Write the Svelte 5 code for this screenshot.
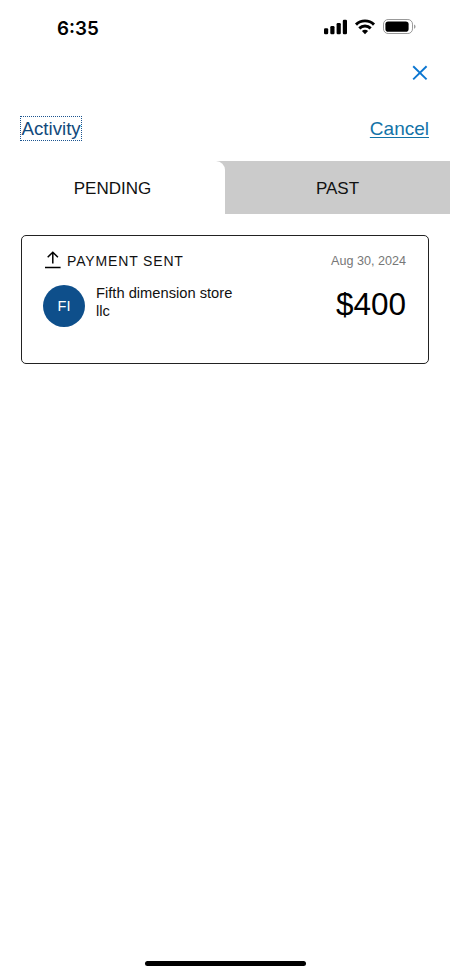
<script>
	let activeTab = $state('pending');

	const tabs = [
		{ value: 'pending', label: 'PENDING' },
		{ value: 'past', label: 'PAST' }
	];

	const payments = [
		{
			status: 'pending',
			type: 'PAYMENT SENT',
			date: 'Aug 30, 2024',
			initials: 'FI',
			name: 'Fifth dimension store llc',
			amount: '$400'
		}
	];

	let visiblePayments = $derived(payments.filter((p) => p.status === activeTab));
</script>

<div class="screen">
	<div class="statusBar">
		<span class="time">6:35</span>
		<svg class="statusIcons" width="94" height="20" viewBox="322 17 94 20">
			<rect x="324" y="28.2" width="4.2" height="6" rx="1.2" />
			<rect x="330.3" y="26" width="4.2" height="8.2" rx="1.2" />
			<rect x="336.6" y="23" width="4.2" height="11.2" rx="1.2" />
			<rect x="342.8" y="19.8" width="4.2" height="14.4" rx="1.2" />
			<g fill="none" stroke="#000" stroke-width="2.9">
				<path d="M356 24.6a12.8 12.8 0 0 1 18 0" />
				<path d="M359.3 28.4a8.1 8.1 0 0 1 11.4 0" />
			</g>
			<path d="M365 34.3l-3.1-3.2a4.5 4.5 0 0 1 6.2 0z" />
			<rect x="383.5" y="19.5" width="29" height="14" rx="4.6" fill="none" stroke="#999" />
			<rect x="385.4" y="21.4" width="23.2" height="10.3" rx="2.8" />
			<path d="M414.2 24.6c1.7.6 1.7 3.6 0 4.2z" fill="#888" />
		</svg>
	</div>

	<div class="closeRow">
		<button class="close" aria-label="Close">
			<svg width="16" height="16" viewBox="0 0 16 16">
				<path d="M1.2 1.2l13.4 13.2M14.6 1.2l-13.4 13.2" fill="none" stroke="#0b76d1" stroke-width="1.9" />
			</svg>
		</button>
	</div>

	<header class="heading">
		<h1>Activity</h1>
		<button class="cancel">Cancel</button>
	</header>

	<div class="tabs" role="tablist">
		{#each tabs as tab}
			<button
				class="tab"
				class:active={tab.value === activeTab}
				role="tab"
				aria-selected={tab.value === activeTab}
				onclick={() => (activeTab = tab.value)}
			>
				<span>{tab.label}</span>
			</button>
		{/each}
	</div>

	<main>
		{#each visiblePayments as payment}
			<article class="card">
				<div class="cardTop">
					<svg class="sentIcon" width="16" height="18" viewBox="0 0 16 18">
						<path
							d="M0 16.4h15.6M7.8 12.6V1.5M2.7 6.2L7.8 1.2l5.1 5"
							fill="none"
							stroke="#000"
							stroke-width="1.5"
						/>
					</svg>
					<span class="type">{payment.type}</span>
					<span class="date">{payment.date}</span>
				</div>
				<div class="cardBody">
					<div class="avatar">{payment.initials}</div>
					<div class="name">{payment.name}</div>
					<div class="amount">{payment.amount}</div>
				</div>
			</article>
		{/each}
	</main>

	<div class="homeBar"></div>
</div>

<style>
	:global(body) {
		margin: 0;
		background-color: #fff;
	}
	.screen {
		display: flex;
		flex-direction: column;
		box-sizing: border-box;
		width: 450px;
		height: 975px;
		overflow: hidden;
		font-family: 'Liberation Sans', Arial, sans-serif;
		color: #111;
	}
	button {
		padding: 0;
		border: none;
		background: none;
		font-family: inherit;
		color: inherit;
		cursor: pointer;
	}
	svg {
		display: block;
	}
	.statusBar {
		display: flex;
		justify-content: space-between;
		align-items: center;
		height: 54px;
		padding: 2px 34px 0 57px;
		box-sizing: border-box;
	}
	.statusIcons {
		margin-top: -2px;
	}
	.time {
		font-family: Inter, sans-serif;
		font-size: 18.8px;
		font-weight: 600;
		color: #000;
	}
	.closeRow {
		display: flex;
		justify-content: flex-end;
		height: 62px;
		padding: 11px 22px 0 0;
		box-sizing: border-box;
	}
	.close {
		width: 16px;
		height: 16px;
	}
	.heading {
		display: flex;
		justify-content: space-between;
		align-items: flex-start;
		height: 26px;
		padding: 0 21px 0 20px;
		margin-bottom: 19px;
	}
	h1 {
		margin: 0;
		padding: 0 0.5px;
		border: 1px dotted #1c5590;
		font-size: 18.7px;
		font-weight: 400;
		line-height: 23px;
		color: #124a7c;
	}
	.cancel {
		font-size: 19px;
		line-height: 26px;
		color: #1273a8;
		text-decoration: underline;
		text-decoration-thickness: 1px;
		text-underline-offset: 2px;
	}
	.tabs {
		display: flex;
		height: 53px;
		background-color: #cbcbcb;
	}
	.tab {
		flex: 1;
		padding-top: 2px;
		font-size: 17px;
	}
	.tab.active {
		background-color: #fff;
	}
	.tab.active:first-child {
		border-top-right-radius: 9px;
	}
	.tab.active:last-child {
		border-top-left-radius: 9px;
	}
	main {
		flex: 1;
		padding: 21px 21px 0;
	}
	.card {
		height: 129px;
		padding: 14px 22px 0 21px;
		box-sizing: border-box;
		border: 1.4px solid #222;
		border-radius: 5px;
	}
	.cardTop {
		display: flex;
		align-items: center;
		height: 20px;
	}
	.sentIcon {
		margin: 0 6px 0 2px;
	}
	.type {
		padding-top: 1px;
		font-size: 14px;
		letter-spacing: 0.85px;
	}
	.date {
		margin-left: auto;
		padding-top: 1px;
		font-size: 12.6px;
		color: #777;
	}
	.cardBody {
		display: flex;
		padding-top: 14px;
	}
	.avatar {
		width: 42px;
		height: 42px;
		margin-top: 0.6px;
		border-radius: 50%;
		background-color: #0e4f8b;
		color: #fff;
		font-size: 14.5px;
		line-height: 43px;
		text-align: center;
	}
	.name {
		width: 150px;
		margin-left: 11px;
		font-size: 14.7px;
		line-height: 18px;
	}
	.amount {
		margin-left: auto;
		font-size: 31.5px;
		line-height: 40px;
		color: #000;
	}
	.homeBar {
		width: 161px;
		height: 5px;
		margin: 0 auto 9px;
		border-radius: 3px;
		background-color: #000;
	}
</style>
